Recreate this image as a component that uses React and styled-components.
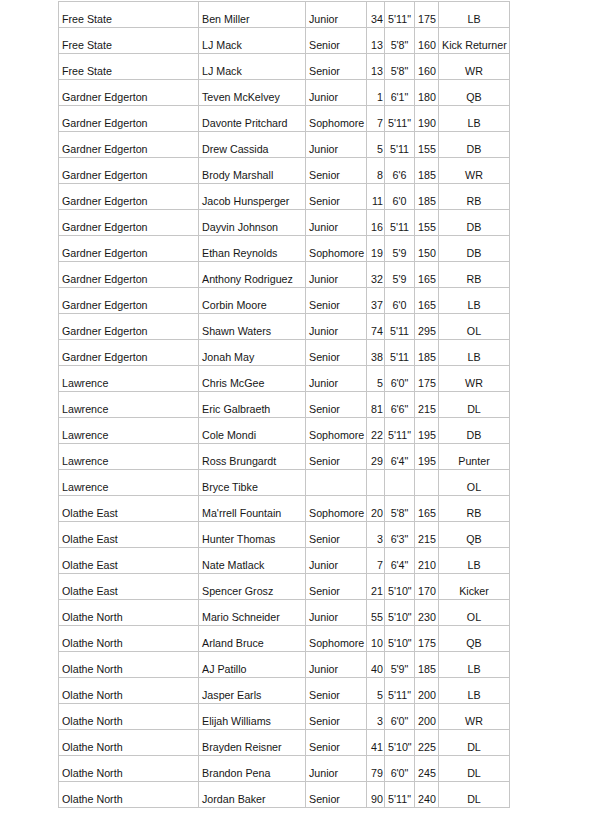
import * as React from 'react'
import styled, { createGlobalStyle } from 'styled-components'

const GlobalStyle = createGlobalStyle`
  html, body {
    margin: 0;
    padding: 0;
    background: #fff;
  }
  body {
    font-family: 'Liberation Sans', Arial, sans-serif;
  }
`

const Page = styled.div`
  padding: 1px 0 0 58px;
`

const Table = styled.table`
  width: 451px;
  table-layout: fixed;
  border-collapse: collapse;
  font-size: 10.7px;
  color: #161616;
`

const Row = styled.tr`
  height: 26px;
`

const Cell = styled.td`
  border: 1px solid #c6c6c6;
  padding: 0 ${(p) => (p.align === 'right' ? '1px' : '3px')} 1px;
  vertical-align: bottom;
  line-height: 13px;
  white-space: nowrap;
  overflow: hidden;
  text-align: ${(p) => p.align || 'left'};
`

const widths = [140, 107, 61, 18, 30, 24, 71]

const players = [
  ['Free State', 'Ben Miller', 'Junior', '34', '5\'11"', '175', 'LB'],
  ['Free State', 'LJ Mack', 'Senior', '13', '5\'8"', '160', 'Kick Returner'],
  ['Free State', 'LJ Mack', 'Senior', '13', '5\'8"', '160', 'WR'],
  ['Gardner Edgerton', 'Teven McKelvey', 'Junior', '1', '6\'1"', '180', 'QB'],
  ['Gardner Edgerton', 'Davonte Pritchard', 'Sophomore', '7', '5\'11"', '190', 'LB'],
  ['Gardner Edgerton', 'Drew Cassida', 'Junior', '5', "5'11", '155', 'DB'],
  ['Gardner Edgerton', 'Brody Marshall', 'Senior', '8', "6'6", '185', 'WR'],
  ['Gardner Edgerton', 'Jacob Hunsperger', 'Senior', '11', "6'0", '185', 'RB'],
  ['Gardner Edgerton', 'Dayvin Johnson', 'Junior', '16', "5'11", '155', 'DB'],
  ['Gardner Edgerton', 'Ethan Reynolds', 'Sophomore', '19', "5'9", '150', 'DB'],
  ['Gardner Edgerton', 'Anthony Rodriguez', 'Junior', '32', "5'9", '165', 'RB'],
  ['Gardner Edgerton', 'Corbin Moore', 'Senior', '37', "6'0", '165', 'LB'],
  ['Gardner Edgerton', 'Shawn Waters', 'Junior', '74', "5'11", '295', 'OL'],
  ['Gardner Edgerton', 'Jonah May', 'Senior', '38', "5'11", '185', 'LB'],
  ['Lawrence', 'Chris McGee', 'Junior', '5', '6\'0"', '175', 'WR'],
  ['Lawrence', 'Eric Galbraeth', 'Senior', '81', '6\'6"', '215', 'DL'],
  ['Lawrence', 'Cole Mondi', 'Sophomore', '22', '5\'11"', '195', 'DB'],
  ['Lawrence', 'Ross Brungardt', 'Senior', '29', '6\'4"', '195', 'Punter'],
  ['Lawrence', 'Bryce Tibke', '', '', '', '', 'OL'],
  ['Olathe East', "Ma'rrell Fountain", 'Sophomore', '20', '5\'8"', '165', 'RB'],
  ['Olathe East', 'Hunter Thomas', 'Senior', '3', '6\'3"', '215', 'QB'],
  ['Olathe East', 'Nate Matlack', 'Junior', '7', '6\'4"', '210', 'LB'],
  ['Olathe East', 'Spencer Grosz', 'Senior', '21', '5\'10"', '170', 'Kicker'],
  ['Olathe North', 'Mario Schneider', 'Junior', '55', '5\'10"', '230', 'OL'],
  ['Olathe North', 'Arland Bruce', 'Sophomore', '10', '5\'10"', '175', 'QB'],
  ['Olathe North', 'AJ Patillo', 'Junior', '40', '5\'9"', '185', 'LB'],
  ['Olathe North', 'Jasper Earls', 'Senior', '5', '5\'11"', '200', 'LB'],
  ['Olathe North', 'Elijah Williams', 'Senior', '3', '6\'0"', '200', 'WR'],
  ['Olathe North', 'Brayden Reisner', 'Senior', '41', '5\'10"', '225', 'DL'],
  ['Olathe North', 'Brandon Pena', 'Junior', '79', '6\'0"', '245', 'DL'],
  ['Olathe North', 'Jordan Baker', 'Senior', '90', '5\'11"', '240', 'DL'],
]

const aligns = ['left', 'left', 'left', 'right', 'center', 'center', 'center']

export default function App() {
  return (
    <Page>
      <GlobalStyle />
      <Table>
        <colgroup>
          {widths.map((w, i) => (
            <col key={i} style={{ width: w }} />
          ))}
        </colgroup>
        <tbody>
          {players.map((player, r) => (
            <Row key={r}>
              {player.map((value, c) => (
                <Cell key={c} align={aligns[c]}>
                  {value}
                </Cell>
              ))}
            </Row>
          ))}
        </tbody>
      </Table>
    </Page>
  )
}
